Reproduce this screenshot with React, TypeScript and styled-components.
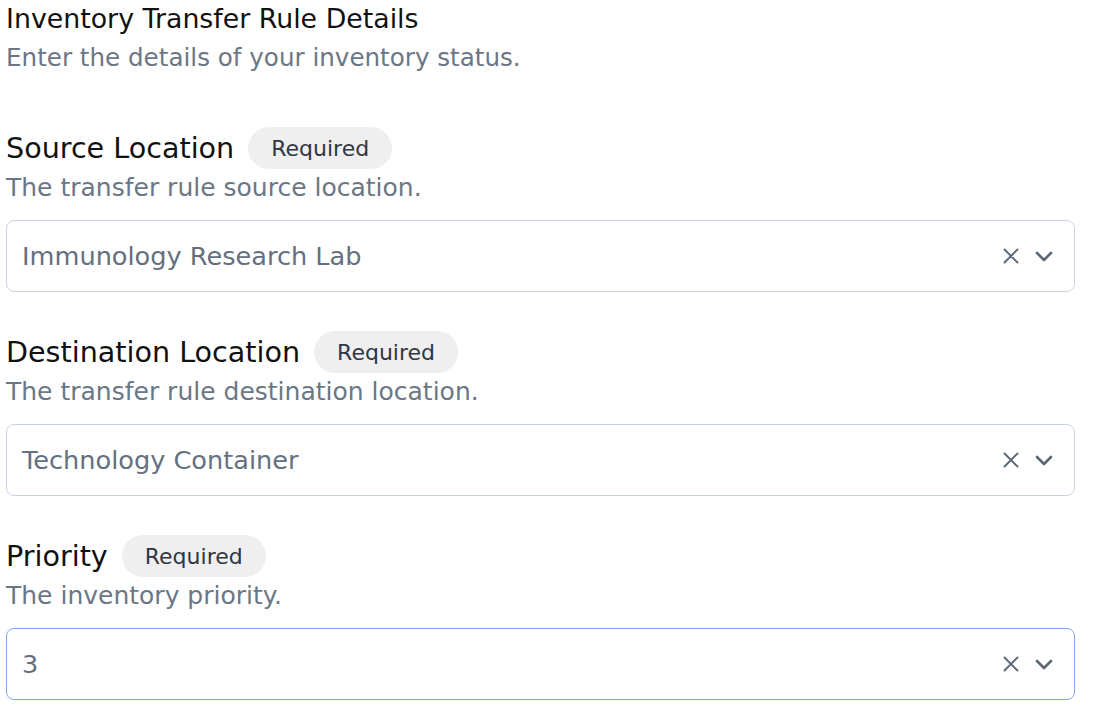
import styled, { createGlobalStyle } from 'styled-components'

const GlobalStyle = createGlobalStyle`
  body {
    margin: 0;
    background: #fff;
    font-family: "DejaVu Sans", "Open Sans", sans-serif;
  }
`

type Field = {
  label: string
  description: string
  value: string
  focused?: boolean
}

const fields: Field[] = [
  { label: 'Source Location', description: 'The transfer rule source location.', value: 'Immunology Research Lab' },
  { label: 'Destination Location', description: 'The transfer rule destination location.', value: 'Technology Container' },
  { label: 'Priority', description: 'The inventory priority.', value: '3', focused: true },
]

const App = () => {
  return (
    <Container>
      <GlobalStyle />
      <Header>
        <Title>Inventory Transfer Rule Details</Title>
        <Subtitle>Enter the details of your inventory status.</Subtitle>
      </Header>
      <Fields>
        {fields.map(field => (
          <Section key={field.label}>
            <LabelRow>
              <Label>{field.label}</Label>
              <Badge>Required</Badge>
            </LabelRow>
            <Description>{field.description}</Description>
            <Select $focused={field.focused}>
              <Value>{field.value}</Value>
              <Icons>
                <svg width="16" height="16" viewBox="0 0 16 16" fill="none" stroke="#5b6776" strokeWidth="1.9" strokeLinecap="round">
                  <path d="M1.5 1.5l13 13M14.5 1.5l-13 13" />
                </svg>
                <svg width="18" height="11" viewBox="0 0 18 11" fill="none" stroke="#5b6776" strokeWidth="2.6" strokeLinecap="round" strokeLinejoin="round">
                  <path d="M2 2l7 7 7-7" />
                </svg>
              </Icons>
            </Select>
          </Section>
        ))}
      </Fields>
    </Container>
  )
}

const Container = styled.div`
  padding: 3px 22px 0 6px;
`

const Header = styled.div`
  display: flex;
  flex-direction: column;
`

const Title = styled.div`
  font-size: 26.8px;
  line-height: 32px;
  color: #111;
`

const Subtitle = styled.div`
  font-size: 24.6px;
  line-height: 32px;
  margin-top: 7px;
  color: #6b7785;
`

const Fields = styled.div`
  display: flex;
  flex-direction: column;
  gap: 39px;
  margin-top: 53px;
`

const Section = styled.div`
  display: flex;
  flex-direction: column;
`

const LabelRow = styled.div`
  display: flex;
  align-items: center;
  gap: 14px;
`

const Label = styled.div`
  font-size: 28.6px;
  line-height: 36px;
  color: #111;
`

const Badge = styled.span`
  display: inline-flex;
  align-items: center;
  height: 42px;
  padding: 0 23px;
  border-radius: 21px;
  background: #efefef;
  color: #2f3742;
  font-size: 22px;
`

const Description = styled.div`
  font-size: 25px;
  line-height: 32px;
  margin-top: 3px;
  color: #6b7785;
`

const Select = styled.div<{ $focused?: boolean }>`
  display: flex;
  align-items: center;
  justify-content: space-between;
  height: 72px;
  box-sizing: border-box;
  margin-top: 16px;
  padding: 0 21px 0 15px;
  border: 1px solid ${p => (p.$focused ? '#7ea8f2' : '#c8d4e2')};
  border-radius: 8px;
  background: #fff;
`

const Value = styled.div`
  font-size: 25.6px;
  color: #64707f;
`

const Icons = styled.div`
  display: flex;
  align-items: center;
  gap: 16px;
`

export default App
